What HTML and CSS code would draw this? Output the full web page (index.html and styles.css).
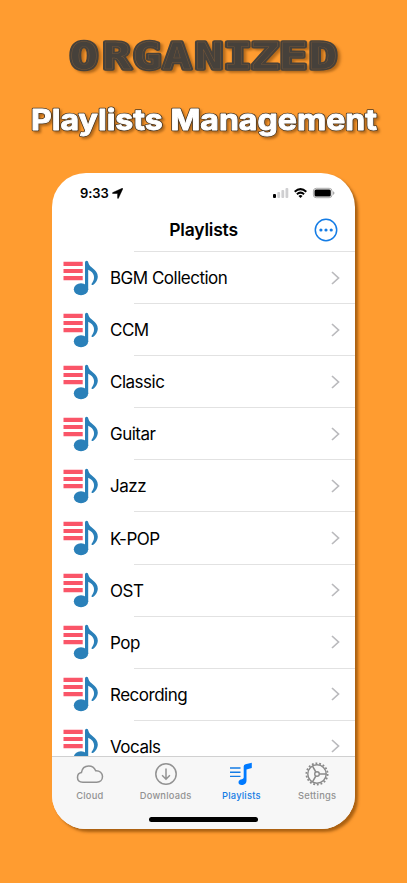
FILE: index.html
```html
<!DOCTYPE html>
<html lang="en">
<head>
<meta charset="utf-8">
<meta name="viewport" content="width=device-width">
<title>Playlists</title>
<link rel="stylesheet" href="styles.css">
</head>
<body>
<svg class="defs" width="0" height="0" aria-hidden="true">
  <symbol id="music" viewBox="0 0 36 36">
    <path d="M.5 3.900h19.200M.5 11h19.200M.5 18.100h19.200" stroke="#fa5568" stroke-width="4.200" fill="none"/>
    <ellipse cx="18" cy="29.200" rx="7.200" ry="6" fill="#2a80b9"/>
    <path d="M22 2.500Q22 .8 23.600 .8T25.300 2.500C26 8 34.800 9 34.800 16.500C34.800 20 32.500 23.500 30 24.900Q28.300 25.500 28.500 24C33 18.500 31.500 12.500 25.200 9.800V29.500H22Z" fill="#2a80b9"/>
  </symbol>
</svg>
<header class="hero">
  <svg class="title" viewBox="0 0 407 54" role="heading" aria-level="1">
    <g class="title-shadow" transform="scale(1.32 1)">
      <text class="organized base" x="63.600 88.400 111.400 134.100 158.300 180.100 200.800 222.200 244.700" y="41">ORGANIZED</text>
      <text class="organized inlay" aria-hidden="true" x="63.600 88.400 111.400 134.100 158.300 180.100 200.800 222.200 244.700" y="41">ORGANIZED</text>
    </g>
  </svg>
  <svg class="subtitle" viewBox="0 0 407 50" role="heading" aria-level="2">
    <g class="title-shadow">
      <text class="management edge" x="31" y="29" textLength="346" lengthAdjust="spacingAndGlyphs">Playlists Management</text>
      <text class="management face" aria-hidden="true" x="31" y="29" textLength="346" lengthAdjust="spacingAndGlyphs">Playlists Management</text>
    </g>
  </svg>
</header>
<main class="phone">
  <div class="status">
    <span class="time">9:33</span>
    <svg class="arrow" width="11" height="11" viewBox="0 0 11 11"><path d="M10.300.2Q11 .1 10.700.9L6.400 10.200Q5.800 11 5.600 10V5.500H.8Q-.1 5.200.8 4.600Z" stroke="#000" stroke-width=".5"/></svg>
    <svg class="signals" width="63" height="12" viewBox="0 0 63 12">
      <rect x="0" y="7" width="3" height="4" rx="1"/>
      <g fill="#cfcfd1"><rect x="4.300" y="5" width="2.800" height="6" rx="1"/><rect x="8.400" y="3" width="2.800" height="8" rx="1"/><rect x="12.500" y="1" width="2.800" height="10" rx="1"/></g>
      <g fill="none" stroke="#000" stroke-width="2"><path d="M21.700 4.700Q27.500-.5 33.300 4.700M23.900 7.200Q27.500 4.100 31.100 7.200"/></g>
      <path d="M25.500 8.900Q27.500 7.200 29.500 8.900L27.500 11.100Z"/>
      <rect x="40.400" y="1.300" width="18.600" height="9.400" rx="2.800" fill="#fff" stroke="#aaa"/><rect x="41.500" y="2.400" width="16.300" height="7.200" rx="1.500"/><path d="M60 4.300q1.500.6 1.500 1.800t-1.500 1.800z" fill="#aaa"/>
    </svg>
  </div>
  <div class="nav">
    <h1>Playlists</h1>
    <svg class="more" width="24" height="24" viewBox="0 0 24 24"><circle cx="12" cy="12" r="10.700" fill="none" stroke="#147ce5" stroke-width="1.500"/><g fill="#147ce5"><circle cx="6.900" cy="12" r="1.600"/><circle cx="12" cy="12" r="1.600"/><circle cx="17.200" cy="12" r="1.600"/></g></svg>
  </div>
  <ul class="list">
    <li><svg class="music"><use href="#music"/></svg><span>BGM Collection</span><svg class="chev" viewBox="0 0 9 14"><path d="M1 1l6.500 6L1 13"/></svg></li>
    <li><svg class="music"><use href="#music"/></svg><span>CCM</span><svg class="chev" viewBox="0 0 9 14"><path d="M1 1l6.500 6L1 13"/></svg></li>
    <li><svg class="music"><use href="#music"/></svg><span>Classic</span><svg class="chev" viewBox="0 0 9 14"><path d="M1 1l6.500 6L1 13"/></svg></li>
    <li><svg class="music"><use href="#music"/></svg><span>Guitar</span><svg class="chev" viewBox="0 0 9 14"><path d="M1 1l6.500 6L1 13"/></svg></li>
    <li><svg class="music"><use href="#music"/></svg><span>Jazz</span><svg class="chev" viewBox="0 0 9 14"><path d="M1 1l6.500 6L1 13"/></svg></li>
    <li><svg class="music"><use href="#music"/></svg><span>K-POP</span><svg class="chev" viewBox="0 0 9 14"><path d="M1 1l6.500 6L1 13"/></svg></li>
    <li><svg class="music"><use href="#music"/></svg><span>OST</span><svg class="chev" viewBox="0 0 9 14"><path d="M1 1l6.500 6L1 13"/></svg></li>
    <li><svg class="music"><use href="#music"/></svg><span>Pop</span><svg class="chev" viewBox="0 0 9 14"><path d="M1 1l6.500 6L1 13"/></svg></li>
    <li><svg class="music"><use href="#music"/></svg><span>Recording</span><svg class="chev" viewBox="0 0 9 14"><path d="M1 1l6.500 6L1 13"/></svg></li>
    <li><svg class="music"><use href="#music"/></svg><span>Vocals</span><svg class="chev" viewBox="0 0 9 14"><path d="M1 1l6.500 6L1 13"/></svg></li>
  </ul>
  <nav class="tabs">
    <div class="tab-row">
      <a class="tab"><svg width="28" height="24" viewBox="0 0 28 24"><path d="M6.800 20.200C3.400 20.200 1.500 18.300 1.500 15.500C1.500 12.900 3 11 5.400 10.600C6 6.500 9 3.900 12.700 3.900C16 3.900 18.500 5.700 19.700 8.700C23.700 8.500 26.500 11 26.500 14.600C26.500 18 24 20.200 20.700 20.200Z" fill="none" stroke="#929292" stroke-width="1.500"/></svg><span>Cloud</span></a>
      <a class="tab"><svg width="24" height="24" viewBox="0 0 24 24" fill="none" stroke="#929292" stroke-width="1.500"><circle cx="12" cy="12" r="10.200"/><path d="M12 6.500v10.700M8.100 13.300l3.900 4 3.900-4"/></svg><span>Downloads</span></a>
      <a class="tab active"><svg width="24" height="24" viewBox="0 0 24 24"><path d="M1 6h10.500M1 10.200h10.500M1 14.400h10.500" stroke="#147ce5" stroke-width="1.400"/><path d="M14.700 4.500Q14.700 2.600 16.500 2.200L22.800.8V6L17.500 7.400V18.500C17.500 21.500 15.200 23 12.700 23C10.700 23 9.500 22 9.500 20.300C9.500 18.300 11 17.600 13 17.200Q14.700 16.800 14.700 15.500Z" fill="#007aff"/></svg><span>Playlists</span></a>
      <a class="tab"><svg width="24" height="24" viewBox="0 0 24 24" fill="none" stroke="#8a8a8a"><circle cx="12" cy="12" r="10.600" stroke-width="1.800" stroke-dasharray="1.850 1.850"/><circle cx="12" cy="12" r="9.200" stroke-width="1.400"/><circle cx="12" cy="12" r="2.300" stroke-width="1.400"/><path d="M14.300 12h7M10.850 10L7.500 4.200M10.850 14L7.500 19.800" stroke-width="1.500"/></svg><span>Settings</span></a>
    </div>
    <div class="home"></div>
  </nav>
</main>
</body>
</html>
```
FILE: styles.css
```css
* { box-sizing: border-box; }
body { margin: 0; height: 883px; overflow: hidden; background: #ff9c30; font-family: Inter, "Liberation Sans", sans-serif; color: #000; }
.defs { position: absolute; }
.hero { height: 173px; padding-top: 28px; }
.title { display: block; width: 407px; height: 54px; }
.subtitle { display: block; width: 407px; height: 50px; margin-top: 19px; }
.title-shadow { filter: drop-shadow(2px 2px 1.2px rgba(105, 55, 5, .5)); }
.organized { font: 700 36.500px "DejaVu Sans Mono", monospace; text-anchor: middle; stroke-linejoin: round; }
.base { fill: #46413b; stroke: #46413b; stroke-width: 3.600px; }
.inlay { fill: #46413b; stroke: #75573a; stroke-width: .4px; }
.management { font: 700 28px Inter, sans-serif; stroke-linejoin: round; }
.edge { fill: #4a3824; stroke: #4a3824; stroke-width: 2.400px; }
.face { fill: #fff; stroke: #fff; stroke-width: .9px; }
.phone { width: 303px; height: 656px; margin-left: 52px; border-radius: 34px; background: #fff; overflow: hidden; display: flex; flex-direction: column; box-shadow: 3px 3px 3px rgba(125, 65, 0, .65); }
.status { height: 38px; flex: none; padding: 2px 19px 0 28px; display: flex; align-items: center; }
.time { font-size: 13px; font-weight: 600; line-height: 16px; letter-spacing: -.1px; }
.arrow { margin-left: 3px; }
.signals { margin-left: auto; }
.nav { height: 40px; flex: none; display: grid; grid-template-columns: 1fr auto 1fr; align-items: center; padding: 0 17px 3px; }
.nav h1 { grid-column: 2; margin: 0; font-size: 17.500px; font-weight: 600; letter-spacing: -.2px; }
.more { justify-self: end; }
.list { list-style: none; margin: 0; padding: 0; flex: 1; min-height: 0; overflow: hidden; }
.list li { height: 52.100px; padding: 1px 15px 0 11px; display: flex; align-items: center; background: linear-gradient(#e2e2e2, #e2e2e2) 82px 0 / 221px 1px no-repeat; }
.music { width: 36px; height: 36px; flex: none; }
.list span { margin-left: 11px; padding-top: 1px; font-size: 17px; line-height: 22px; letter-spacing: -.5px; }
.chev { width: 9px; height: 14px; margin-left: auto; fill: none; stroke: #bababd; stroke-width: 1.700; }
.tabs { height: 73px; flex: none; background: #f7f7f7; border-top: 1px solid #d0d0d0; padding-top: 5px; }
.tab-row { display: grid; grid-template-columns: repeat(4, 1fr); height: 55px; }
.tab { display: flex; flex-direction: column; align-items: center; color: #929292; font-size: 9.300px; line-height: 12px; font-weight: 500; gap: 4px; letter-spacing: .25px; }
.tab.active { color: #147ce5; }
.home { width: 109px; height: 4.500px; margin: 0 auto; border-radius: 3px; background: #000; }
```
